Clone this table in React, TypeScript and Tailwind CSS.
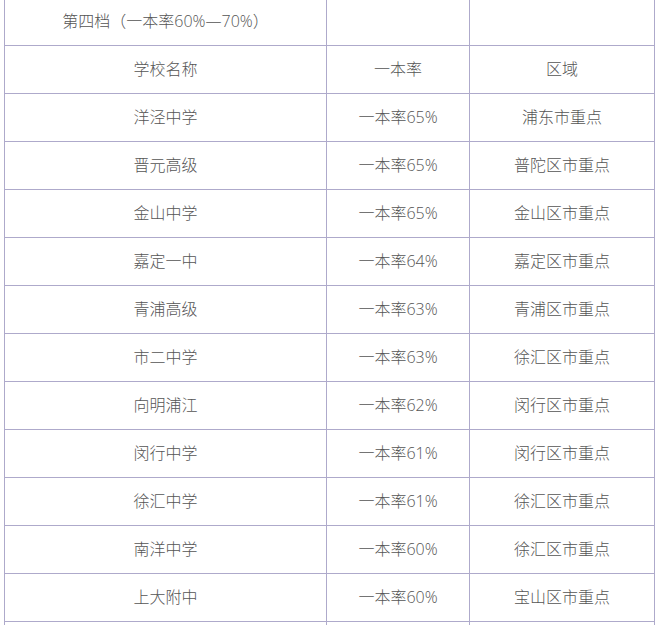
const rows: [string, string, string][] = [
  ['洋泾中学', '一本率65%', '浦东市重点'],
  ['晋元高级', '一本率65%', '普陀区市重点'],
  ['金山中学', '一本率65%', '金山区市重点'],
  ['嘉定一中', '一本率64%', '嘉定区市重点'],
  ['青浦高级', '一本率63%', '青浦区市重点'],
  ['市二中学', '一本率63%', '徐汇区市重点'],
  ['向明浦江', '一本率62%', '闵行区市重点'],
  ['闵行中学', '一本率61%', '闵行区市重点'],
  ['徐汇中学', '一本率61%', '徐汇区市重点'],
  ['南洋中学', '一本率60%', '徐汇区市重点'],
  ['上大附中', '一本率60%', '宝山区市重点'],
  ['', '', ''],
]

function Row({ cells }: { cells: [string, string, string] }) {
  return (
    <div className="flex h-[48px] border-b border-[#aeaacb]">
      <div className="w-[322px] pb-[2px] flex items-center justify-center border-r border-[#aeaacb]">{cells[0]}</div>
      <div className="w-[143px] pb-[2px] flex items-center justify-center border-r border-[#aeaacb]">{cells[1]}</div>
      <div className="w-[185px] pb-[2px] flex items-center justify-center border-r border-[#aeaacb]">{cells[2]}</div>
    </div>
  )
}

export default function App() {
  return (
    <div
      className="w-[662px] h-[625px] overflow-hidden bg-white text-[16px] font-light text-[#555]"
      style={{ fontFamily: '"Open Sans", "Noto Sans CJK SC", sans-serif' }}
    >
      <div className="ml-[4px] mt-[-3px] w-[651px] border-l border-t border-[#aeaacb]">
        <Row cells={['第四档（一本率60%—70%）', '', '']} />
        <Row cells={['学校名称', '一本率', '区域']} />
        {rows.map((r, i) => (
          <Row key={i} cells={r} />
        ))}
      </div>
    </div>
  )
}
